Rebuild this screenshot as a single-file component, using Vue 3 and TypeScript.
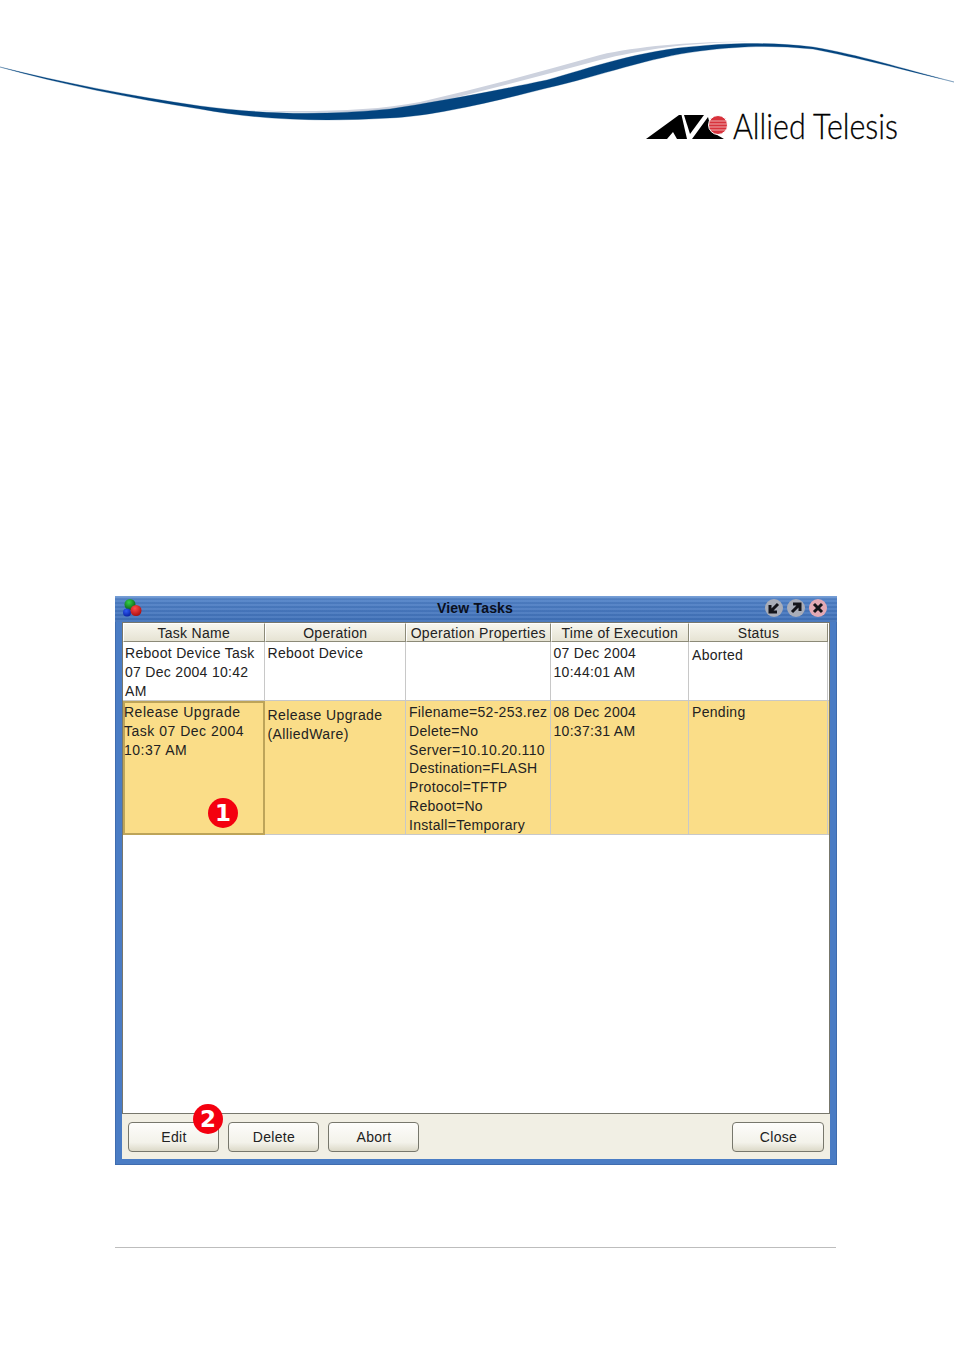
<template>
  <div class="page">
    <svg class="banner" width="954" height="150" viewBox="0 0 954 150">
      <path
        d="M250 110 C300 112 370 112 420 102 C480 88 540 72 600 55 C640 46 700 41 750 42 C690 42 640 50 600 60 C540 76 480 92 420 106 C370 114 300 114 250 110 Z"
        fill="#cdd2de"
      />
      <path
        d="M0 67 C60 82 130 96 200 106 C260 114 320 116 390 109 C430 103 480 94 547 80 C590 68 640 50 700 46 C730 43 770 42 813 47 C860 55 900 68 954 82 C900 69 860 58 813 49 C770 45 740 46 700 51 C650 57 600 76 547 88 C480 105 430 116 390 118 C320 122 260 120 200 109 C130 98 60 84 0 67 Z"
        fill="#03447f"
        stroke="#03447f"
        stroke-width="0.3"
      />
      <g fill="#000">
        <polygon points="646,139 679,115 681.5,115 687,139 677,139 673,132 667,139" />
        <polygon points="684,115 704,115 690,134" />
        <polygon points="708,117 692,139 724,139 712,132" />
      </g>
      <circle cx="718" cy="125" r="9.5" fill="#d8323c" stroke="#fff" stroke-width="1" />
      <g stroke="#f4c9c9" stroke-width="0.8">
        <line x1="709" y1="121" x2="727" y2="121" />
        <line x1="709" y1="124" x2="727" y2="124" />
        <line x1="709" y1="127" x2="727" y2="127" />
        <line x1="710" y1="130" x2="726" y2="130" />
      </g>
      <text class="brand" x="733" y="139" textLength="165" lengthAdjust="spacingAndGlyphs">Allied Telesis</text>
    </svg>

    <div class="window">
      <div class="titlebar">
        <svg class="app-icon" width="22" height="20" viewBox="0 0 22 20">
          <defs>
            <radialGradient id="ballG" cx="0.4" cy="0.3" r="0.8"><stop offset="0" stop-color="#35d048" /><stop offset="1" stop-color="#04500f" /></radialGradient>
            <radialGradient id="ballB" cx="0.4" cy="0.3" r="0.8"><stop offset="0" stop-color="#2f5cf5" /><stop offset="1" stop-color="#061a9c" /></radialGradient>
            <radialGradient id="ballR" cx="0.4" cy="0.3" r="0.8"><stop offset="0" stop-color="#ff4a4a" /><stop offset="1" stop-color="#a00808" /></radialGradient>
          </defs>
          <circle cx="8" cy="6.5" r="5.5" fill="url(#ballG)" />
          <circle cx="5" cy="14.5" r="4" fill="url(#ballB)" />
          <circle cx="14" cy="12.5" r="5.5" fill="url(#ballR)" />
        </svg>
        <span class="title">View Tasks</span>
        <div class="win-buttons">
          <svg v-for="b in winButtons" :key="b.arrow" width="20" height="20" viewBox="0 0 20 20" class="win-btn">
            <circle cx="10" cy="10" r="9" :fill="b.fill" />
            <path :d="b.arrow" fill="none" stroke="#14141a" stroke-width="3" />
          </svg>
        </div>
      </div>

      <div class="content">
        <div class="grid head">
          <div v-for="h in headers" :key="h" class="th">{{ h }}</div>
        </div>
        <div class="grid row row-plain">
          <div class="td first"><p>Reboot Device Task</p><p>07 Dec 2004 10:42</p><p>AM</p></div>
          <div class="td"><p>Reboot Device</p></div>
          <div class="td"></div>
          <div class="td"><p>07 Dec 2004</p><p>10:44:01 AM</p></div>
          <div class="td status"><p>Aborted</p></div>
        </div>
        <div class="grid row row-selected">
          <div class="td first picked">
            <p>Release Upgrade</p><p>Task 07 Dec 2004</p><p>10:37 AM</p>
            <span class="badge badge-one">1</span>
          </div>
          <div class="td lower"><p>Release Upgrade</p><p>(AlliedWare)</p></div>
          <div class="td">
            <p v-for="line in properties" :key="line">{{ line }}</p>
          </div>
          <div class="td"><p>08 Dec 2004</p><p>10:37:31 AM</p></div>
          <div class="td"><p>Pending</p></div>
        </div>
      </div>

      <div class="actions">
        <button class="btn edit">Edit<span class="badge badge-two">2</span></button>
        <button class="btn">Delete</button>
        <button class="btn">Abort</button>
        <button class="btn close">Close</button>
      </div>
    </div>

    <div class="rule"></div>
  </div>
</template>

<script setup lang="ts">
const headers = ['Task Name', 'Operation', 'Operation Properties', 'Time of Execution', 'Status']

const properties = [
  'Filename=52-253.rez',
  'Delete=No',
  'Server=10.10.20.110',
  'Destination=FLASH',
  'Protocol=TFTP',
  'Reboot=No',
  'Install=Temporary'
]

const winButtons = [
  { fill: '#a9adb8', arrow: 'M14 6 L7 13 M6 7 V14 H13' },
  { fill: '#a9adb8', arrow: 'M6 14 L13 7 M7 6 H14 V13' },
  { fill: '#e3a9b4', arrow: 'M6 6 L14 14 M14 6 L6 14' }
]
</script>

<style>
html,
body {
  background: #fff;
}
</style>

<style scoped>
.page {
  width: 954px;
  height: 1350px;
  overflow: hidden;
  font-family: "Liberation Sans", Arial, sans-serif;
  color: #222;
}

.banner {
  display: block;
}

.brand {
  font-family: Lato, "Liberation Sans", sans-serif;
  font-weight: 300;
  font-size: 36px;
  fill: #000;
  stroke: #000;
  stroke-width: 0.3px;
}

.window {
  width: 722px;
  height: 569px;
  margin: 446px 0 0 115px;
  box-sizing: border-box;
  display: flex;
  flex-direction: column;
  background: #f1efe4;
  border: solid #4a7cc4;
  border-width: 0 7px 6px;
  outline: 1px solid #3f6cae;
  outline-offset: -1px;
}

.titlebar {
  position: relative;
  height: 26px;
  margin: 0 -7px;
  flex: none;
  display: flex;
  align-items: center;
  padding: 0 9px 3px 7px;
  box-sizing: border-box;
  background:
    repeating-linear-gradient(180deg, rgba(255, 255, 255, 0.07) 0 2px, rgba(0, 0, 0, 0.04) 2px 4px),
    linear-gradient(180deg, #6f9ad4 0, #4f80c6 4px, #3f70b8 100%);
}

.app-icon {
  flex: none;
}

.title {
  position: absolute;
  left: 0;
  width: 720px;
  text-align: center;
  font-weight: 700;
  font-size: 14px;
  letter-spacing: 0.2px;
  color: #0a0f1c;
}

.win-buttons {
  margin-left: auto;
  display: flex;
  gap: 2px;
  position: relative;
}

.content {
  height: 492px;
  flex: none;
  box-sizing: border-box;
  background: #fff;
  border: 1px solid #77776c;
  font-size: 14px;
  letter-spacing: 0.3px;
}

.grid {
  display: grid;
  grid-template-columns: 141.5px 141.5px 144.5px 138.5px 139px;
}

.head {
  height: 19px;
}

.th {
  box-sizing: border-box;
  height: 19px;
  line-height: 19px;
  text-align: center;
  background: linear-gradient(180deg, #f7f6ee, #e6e3d3);
  border: 1px solid #8c8a78;
  border-left-color: #fff;
  border-top-color: #fff;
  white-space: nowrap;
  overflow: hidden;
}

.row {
  border-bottom: 1px solid #c8c8c8;
}

.row-plain {
  height: 59px;
  box-sizing: border-box;
}

.row-selected {
  height: 134px;
  box-sizing: border-box;
  background: #fadd88;
}

.td {
  position: relative;
  box-sizing: border-box;
  padding: 2px 0 0 3px;
  border-right: 1px solid #c8c8c8;
  line-height: 18.8px;
  white-space: nowrap;
}

.td p {
  margin: 0;
}

.first {
  padding-left: 2px;
}

.status {
  padding-top: 4px;
}

.lower {
  padding-top: 5px;
  letter-spacing: 0.4px;
}

.picked {
  padding: 0;
  border: 2px solid #bda459;
  letter-spacing: 0.5px;
}

.picked p {
  margin-left: -1px;
}

.actions {
  flex: 1;
  display: flex;
  gap: 9px;
  align-items: flex-start;
  padding: 8px 6px 0 6px;
}

.btn {
  position: relative;
  width: 91px;
  height: 30px;
  padding: 0 0 0 1px;
  font-family: inherit;
  font-size: 14px;
  letter-spacing: 0.3px;
  color: #222;
  background: linear-gradient(180deg, #fdfdfb, #f3f2ea 70%, #dcd9c8);
  border: 1px solid #77776c;
  border-radius: 4px;
}

.close {
  width: 92px;
  margin-left: auto;
}

.badge {
  position: absolute;
  width: 30px;
  height: 30px;
  border-radius: 50%;
  background: #f4000f;
  color: #fff;
  font-family: "DejaVu Sans", sans-serif;
  font-weight: 700;
  font-size: 23px;
  line-height: 30px;
  letter-spacing: 0;
  text-align: center;
}

.badge-one {
  left: 83px;
  top: 95px;
}

.badge-two {
  left: 64px;
  top: -19px;
}

.rule {
  width: 721px;
  height: 1px;
  margin: 82px 0 0 115px;
  background: #bdbdbd;
}
</style>
